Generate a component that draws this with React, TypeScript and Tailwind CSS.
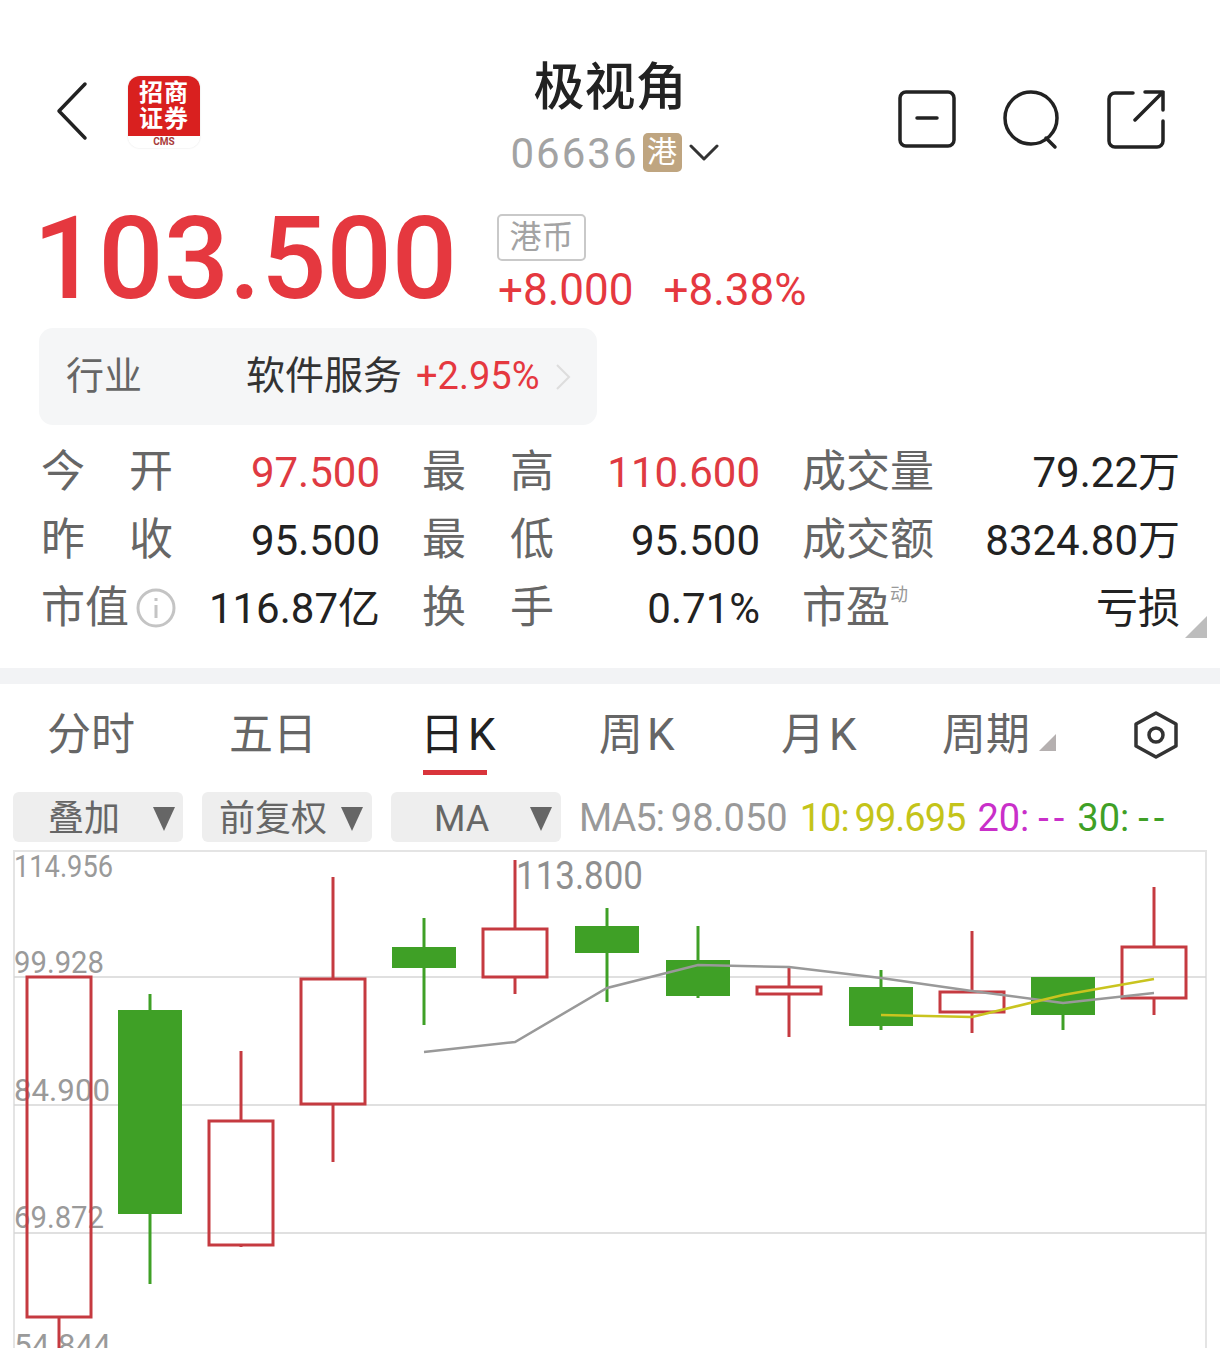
import React from 'react';

const RED = '#c53a40';
const GREEN = '#3fa026';

type Candle = { x: number; top: number; bottom: number; high: number; low: number; up: boolean };

const candles: Candle[] = [
  { x: 59, top: 977, bottom: 1317, high: 977, low: 1350, up: true },
  { x: 150, top: 1010, bottom: 1214, high: 994, low: 1284, up: false },
  { x: 241, top: 1121, bottom: 1245, high: 1051, low: 1247, up: true },
  { x: 333, top: 979, bottom: 1104, high: 877, low: 1162, up: true },
  { x: 424, top: 947, bottom: 968, high: 918, low: 1025, up: false },
  { x: 515, top: 929, bottom: 977, high: 860, low: 994, up: true },
  { x: 607, top: 926, bottom: 953, high: 908, low: 1002, up: false },
  { x: 698, top: 960, bottom: 996, high: 926, low: 998, up: false },
  { x: 789, top: 987, bottom: 994, high: 967, low: 1037, up: true },
  { x: 881, top: 987, bottom: 1026, high: 970, low: 1030, up: false },
  { x: 972, top: 992, bottom: 1012, high: 931, low: 1033, up: true },
  { x: 1063, top: 977, bottom: 1015, high: 977, low: 1030, up: false },
  { x: 1154, top: 947, bottom: 998, high: 887, low: 1015, up: true },
];

const axisLabels = [
  { y: 877, text: '114.956', width: 99 },
  { y: 973, text: '99.928', width: 90 },
  { y: 1101, text: '84.900', width: 96 },
  { y: 1228, text: '69.872', width: 90 },
  { y: 1356, text: '54.844', width: 97 },
];

const Label = ({ text }: { text: string }) => (
  <div className="flex justify-between w-[132px] text-[44px] text-[#666666]">
    {text.split('').map((c) => (
      <span key={c}>{c}</span>
    ))}
  </div>
);

const Value = ({ children, red }: { children: React.ReactNode; red?: boolean }) => (
  <div className={`text-right text-[42px] ${red ? 'text-[#df3a42]' : 'text-[#222222]'}`}>{children}</div>
);

const Caret = () => (
  <svg width="22" height="26" viewBox="0 0 22 26" className="shrink-0">
    <path d="M0 1h22L11 25z" fill="#666666" />
  </svg>
);

const KChart = () => (
  <svg className="block w-[1194px] h-[498px] ml-[13px]" viewBox="13 850 1194 498">
    <path d="M14 1348V851H1206V1348" fill="none" stroke="#e4e4e4" strokeWidth="2" />
    {[977, 1105, 1233].map((y) => (
      <line key={y} x1="14" x2="1206" y1={y} y2={y} stroke="#d6d6d6" strokeWidth="1.5" />
    ))}
    {axisLabels.map((l) => (
      <text
        key={l.text}
        x="14"
        y={l.y}
        fontSize="32"
        fill="#9a9a9a"
        fontFamily="Roboto, sans-serif"
        textLength={l.width}
        lengthAdjust="spacingAndGlyphs"
      >
        {l.text}
      </text>
    ))}
    <text x="516" y="889" fontSize="38" fill="#8f8f8f" fontFamily="Roboto, sans-serif" textLength={127} lengthAdjust="spacingAndGlyphs">
      113.800
    </text>
    {candles.map((c) => {
      const color = c.up ? RED : GREEN;
      return (
        <g key={c.x}>
          <line x1={c.x} x2={c.x} y1={c.high} y2={c.top} stroke={color} strokeWidth="3" />
          <line x1={c.x} x2={c.x} y1={c.bottom} y2={c.low} stroke={color} strokeWidth="3" />
          {c.up ? (
            <rect x={c.x - 32} y={c.top} width="64" height={c.bottom - c.top} fill="none" stroke={color} strokeWidth="3" />
          ) : (
            <rect x={c.x - 32} y={c.top} width="64" height={c.bottom - c.top} fill={color} />
          )}
        </g>
      );
    })}
    <polyline
      points="424,1052 515,1042 607,988 698,965 789,967 881,978 972,991 1063,1003 1154,993"
      fill="none"
      stroke="#999999"
      strokeWidth="2.5"
    />
    <polyline points="881,1015 972,1017 1063,995 1154,979" fill="none" stroke="#c9c41f" strokeWidth="2.5" />
  </svg>
);

export default function App() {
  return (
    <div
      className="w-[1220px] h-[1348px] overflow-hidden bg-white"
      style={{ fontFamily: 'Roboto, "Noto Sans CJK SC", sans-serif' }}
    >
      {/* header */}
      <div className="grid grid-cols-[1fr_auto_1fr] h-[208px] pt-[57px]">
        <div className="flex items-start pl-[56px] pt-[19px]">
          <svg width="34" height="60" viewBox="0 0 34 60" fill="none" className="mt-[5px]">
            <path d="M29 3L3 30l26 27" stroke="#222222" strokeWidth="3.5" strokeLinecap="round" strokeLinejoin="round" />
          </svg>
          <div className="ml-[38px] w-[72px] h-[72px] rounded-[12px] overflow-hidden flex flex-col shadow-[0_0_2px_#dddddd]">
            <div className="h-[60px] bg-[#d9201f] text-white text-[24px] font-bold leading-[26px] tracking-[1px] text-center pt-[4px]">
              <div>招商</div>
              <div>证券</div>
            </div>
            <div className="flex-1 bg-white text-[#a83a3a] text-[10px] font-bold leading-[12px] text-center">CMS</div>
          </div>
        </div>
        <div className="flex flex-col items-center">
          <div className="text-[51px] font-medium leading-[62px] text-[#222222]">极视角</div>
          <div className="flex items-center mt-[5px] -mr-[9px]">
            <span className="text-[42px] leading-[52px] tracking-[2px] text-[#a3a3a3] mt-[4px]">06636</span>
            <span className="ml-[4px] w-[39px] h-[39px] rounded-[5px] bg-[#bfa580] text-white text-[30px] leading-[38px] text-center">港</span>
            <svg width="30" height="18" viewBox="0 0 30 18" fill="none" className="ml-[7px] mt-[2px]">
              <path d="M2 2l13 13L28 2" stroke="#333333" strokeWidth="3" strokeLinecap="round" strokeLinejoin="round" />
            </svg>
          </div>
        </div>
        <div className="flex justify-end items-start gap-[47px] pr-[55px] pt-[33px]">
          <svg width="58" height="60" viewBox="0 0 58 60" fill="none" stroke="#222222" strokeWidth="3.5" strokeLinecap="round">
            <rect x="2" y="2" width="54" height="54" rx="6" />
            <path d="M19 28h20" />
          </svg>
          <svg width="58" height="60" viewBox="0 0 58 60" fill="none" stroke="#222222" strokeWidth="3.5" strokeLinecap="round">
            <circle cx="28" cy="28" r="26" />
            <path d="M43 48l9 9" />
          </svg>
          <svg width="58" height="60" viewBox="0 0 58 60" fill="none" stroke="#222222" strokeWidth="3.5" strokeLinecap="round" strokeLinejoin="round" className="-ml-[1px]">
            <path d="M26 3H8a6 6 0 0 0-6 6v42a6 6 0 0 0 6 6h42a6 6 0 0 0 6-6V31" />
            <path d="M28 30L56 2M38 2h18v18" />
          </svg>
        </div>
      </div>

      {/* price */}
      <div className="flex pl-[33px] h-[120px] pt-[6px]">
        <div className="text-[115px] font-medium leading-[96px] text-[#e5383f] w-[464px] -mt-[3px]">103.500</div>
        <div className="flex flex-col items-start">
          <div className="w-[89px] h-[47px] border-2 border-[#c9c9c9] rounded-[5px] text-[32px] leading-[42px] text-center text-[#a3a3a3]">港币</div>
          <div className="flex text-[44px] leading-[52px] text-[#e5383f] mt-[3px] pl-[1px]">
            <span>+8.000</span>
            <span className="ml-[30px]">+8.38%</span>
          </div>
        </div>
      </div>

      {/* industry */}
      <div className="flex items-center ml-[39px] w-[558px] h-[97px] bg-[#f5f6f7] rounded-[14px] pl-[27px]">
        <span className="text-[38px] text-[#666666] w-[180px]">行业</span>
        <span className="text-[39px] text-[#333333] w-[170px]">软件服务</span>
        <span className="text-[38px] text-[#e5383f] w-[139px]">+2.95%</span>
        <svg width="16" height="28" viewBox="0 0 16 28" fill="none">
          <path d="M2 2l12 12L2 26" stroke="#dddddd" strokeWidth="2" />
        </svg>
      </div>

      {/* quote table */}
      <div className="relative grid grid-cols-[132px_207px_174px_206px_174px_246px] auto-rows-[68px] items-center pl-[41px] pt-[13px] h-[243px]">
        <Label text="今开" />
        <Value red>97.500</Value>
        <div className="pl-[42px]"><Label text="最高" /></div>
        <Value red>110.600</Value>
        <div className="pl-[42px]"><Label text="成交量" /></div>
        <Value>79.22万</Value>

        <Label text="昨收" />
        <Value>95.500</Value>
        <div className="pl-[42px]"><Label text="最低" /></div>
        <Value>95.500</Value>
        <div className="pl-[42px]"><Label text="成交额" /></div>
        <Value>8324.80万</Value>

        <div className="flex items-center text-[44px] text-[#666666] whitespace-nowrap">
          市值
          <svg width="42" height="42" viewBox="0 0 42 42" fill="none" className="ml-[6px] shrink-0">
            <circle cx="21" cy="21" r="18" stroke="#c4c4c4" strokeWidth="3" />
            <path d="M21 18v13M21 11v3" stroke="#c4c4c4" strokeWidth="3" />
          </svg>
        </div>
        <Value>116.87亿</Value>
        <div className="pl-[42px]"><Label text="换手" /></div>
        <Value>0.71%</Value>
        <div className="pl-[42px] flex items-start text-[44px] text-[#666666]">
          市盈<span className="text-[18px] leading-[28px] text-[#999999] mt-[6px]">动</span>
        </div>
        <Value>亏损</Value>
        <div className="absolute left-[1185px] top-[191px] w-0 h-0 border-l-[22px] border-l-transparent border-b-[22px] border-b-[#bdbdbd]" />
      </div>

      <div className="h-[16px] bg-[#f2f3f5]" />

      {/* period tabs */}
      <div className="flex items-center h-[108px] pl-[47px] text-[44px] text-[#666666] pb-[6px]">
        <span className="w-[182px]">分时</span>
        <span className="w-[191px]">五日</span>
        <span className="relative w-[179px] text-[#222222]">
          日<span className="ml-[4px]">K</span>
          <span className="absolute left-[3px] top-[68px] w-[64px] h-[5px] bg-[#d9343b]" />
        </span>
        <span className="w-[182px]">周<span className="ml-[4px]">K</span></span>
        <span className="w-[161px]">月<span className="ml-[4px]">K</span></span>
        <span className="flex items-center w-[191px]">
          周期
          <span className="ml-[9px] mt-[14px] w-0 h-0 border-l-[17px] border-l-transparent border-b-[17px] border-b-[#b5b0b0]" />
        </span>
        <svg width="46" height="48" viewBox="0 0 46 48" fill="none" stroke="#333333" strokeWidth="3.5" strokeLinejoin="round">
          <path d="M23 2l20 11v22L23 46 3 35V13z" />
          <circle cx="23" cy="24" r="7" />
        </svg>
      </div>

      {/* indicator bar */}
      <div className="flex items-center h-[50px] pl-[13px]">
        <div className="flex items-center w-[170px] h-[50px] bg-[#eeeeee] rounded-[6px] pl-[35px] pr-[8px] pt-[3px] justify-between text-[36px] text-[#666666]">
          <span>叠加</span>
          <Caret />
        </div>
        <div className="flex items-center ml-[19px] w-[170px] h-[50px] bg-[#eeeeee] rounded-[6px] pl-[17px] pr-[9px] pt-[3px] justify-between text-[36px] text-[#666666]">
          <span>前复权</span>
          <Caret />
        </div>
        <div className="flex items-center ml-[19px] w-[170px] h-[50px] bg-[#eeeeee] rounded-[6px] pl-[43px] pr-[9px] pt-[3px] justify-between text-[36px] text-[#666666]">
          <span>MA</span>
          <Caret />
        </div>
        <div className="flex ml-[18px] pt-[3px] text-[38px] whitespace-nowrap">
          <span className="text-[#999999]"><span className="tracking-[-1px]">MA5:</span><span className="ml-[7px]">98.050</span></span>
          <span className="ml-[12px] text-[#c4c41a]"><span className="tracking-[-1px]">10:</span><span className="ml-[6px] tracking-[-1px]">99.695</span></span>
          <span className="ml-[12px] text-[#c92fc9]">20:<span className="ml-[9px] tracking-[5px]">--</span></span>
          <span className="ml-[8px] text-[#3fa026]">30:<span className="ml-[9px] tracking-[5px]">--</span></span>
        </div>
      </div>

      <div className="mt-[8px]">
        <KChart />
      </div>
    </div>
  );
}
